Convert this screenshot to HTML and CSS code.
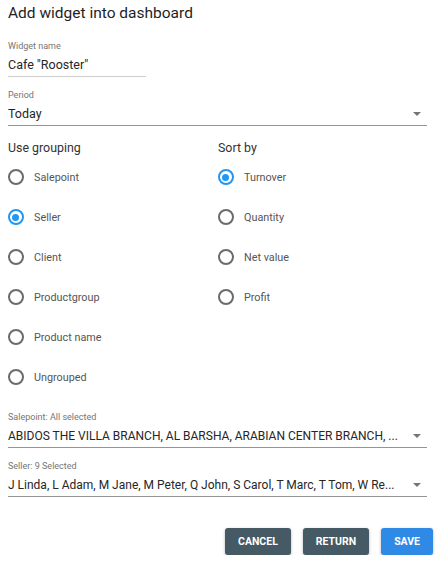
FILE: index.html
```html
<!DOCTYPE html>
<html>
<head>
<meta charset="utf-8">
<link rel="stylesheet" href="styles.css">
</head>
<body>
<div class="dialog">
  <h1 class="title">Add widget into dashboard</h1>

  <div class="field field-short">
    <div class="label">Widget name</div>
    <div class="value">Cafe "Rooster"</div>
  </div>

  <div class="field select">
    <div class="label">Period</div>
    <div class="value"><span class="text">Today</span><span class="arrow"></span></div>
  </div>

  <div class="groups">
    <div class="col">
      <div class="heading">Use grouping</div>
      <div class="radio"><span class="circle"></span>Salepoint</div>
      <div class="radio"><span class="circle on"></span>Seller</div>
      <div class="radio"><span class="circle"></span>Client</div>
      <div class="radio"><span class="circle"></span>Productgroup</div>
      <div class="radio"><span class="circle"></span>Product name</div>
      <div class="radio"><span class="circle"></span>Ungrouped</div>
    </div>
    <div class="col">
      <div class="heading">Sort by</div>
      <div class="radio"><span class="circle on"></span>Turnover</div>
      <div class="radio"><span class="circle"></span>Quantity</div>
      <div class="radio"><span class="circle"></span>Net value</div>
      <div class="radio"><span class="circle"></span>Profit</div>
    </div>
  </div>

  <div class="field select first-after">
    <div class="label">Salepoint: All selected</div>
    <div class="value long"><span class="text">ABIDOS THE VILLA BRANCH, AL BARSHA, ARABIAN CENTER BRANCH, ...</span><span class="arrow"></span></div>
  </div>

  <div class="field select">
    <div class="label">Seller: 9 Selected</div>
    <div class="value long"><span class="text">J Linda, L Adam, M Jane, M Peter, Q John, S Carol, T Marc, T Tom, W Re...</span><span class="arrow"></span></div>
  </div>

  <div class="actions">
    <button class="btn dark">CANCEL</button>
    <button class="btn dark">RETURN</button>
    <button class="btn blue">SAVE</button>
  </div>
</div>
</body>
</html>
```
FILE: styles.css
```css
* { box-sizing: border-box; }
html, body { margin: 0; padding: 0; background: #fff; }
body {
  font-family: Roboto, "Liberation Sans", sans-serif;
  color: rgba(0,0,0,0.87);
}
.dialog {
  width: 441px;
  padding: 0 14px 0 8px;
}
.title {
  margin: 0;
  font-size: 15.5px;
  font-weight: 400;
  line-height: 26px;
  color: #1f1f1f;
}
.field { margin-top: 12px; }
.title + .field { margin-top: 14px; }
.field.first-after { margin-top: 14px; }
.label {
  font-size: 9px;
  line-height: 12px;
  color: #757575;
}
.value {
  margin-top: 3px;
  height: 22px;
  font-size: 12.5px;
  line-height: 20px;
  border-bottom: 1px solid #949494;
  display: flex;
  align-items: center;
  padding-bottom: 1px;
  color: #262626;
}
.value.long { font-size: 12px; }
.field-short .value {
  width: 138px;
  border-bottom-color: #cfcfcf;
}
.select .text {
  flex: 1;
  white-space: nowrap;
  overflow: hidden;
}
.arrow {
  width: 0; height: 0;
  border-left: 4px solid transparent;
  border-right: 4px solid transparent;
  border-top: 4px solid #757575;
  margin: 0 6px 0 8px;
}
.groups {
  display: grid;
  grid-template-columns: 210px 1fr;
  margin-top: 12px;
}
.heading {
  font-size: 12.4px;
  line-height: 20px;
  margin-bottom: -1px;
  color: #333;
}
.radio {
  height: 40px;
  display: flex;
  align-items: center;
  font-size: 10.8px;
  color: #555;
}
.circle {
  width: 16px; height: 16px;
  border: 2px solid #6b6b6b;
  border-radius: 50%;
  margin-left: -0.5px;
  margin-right: 10.5px;
  flex: none;
  position: relative;
}
.circle.on { border-color: #2196f3; }
.circle.on::after {
  content: "";
  position: absolute;
  left: 2.5px; top: 2.5px;
  width: 7px; height: 7px;
  border-radius: 50%;
  background: #2196f3;
}
.actions {
  display: flex;
  justify-content: flex-end;
  gap: 12px;
  margin-top: 31px;
  margin-right: -6px;
}
.btn {
  height: 27px;
  border: none;
  border-radius: 3px;
  font-family: Roboto, "Liberation Sans", sans-serif;
  font-size: 10.5px;
  font-weight: 700;
  color: #fff;
  padding: 0 13px;
  box-shadow: 0 1px 3px rgba(0,0,0,0.3);
}
.btn.dark { background: #455a64; }
.btn.blue { background: #2f8ae5; }
```
